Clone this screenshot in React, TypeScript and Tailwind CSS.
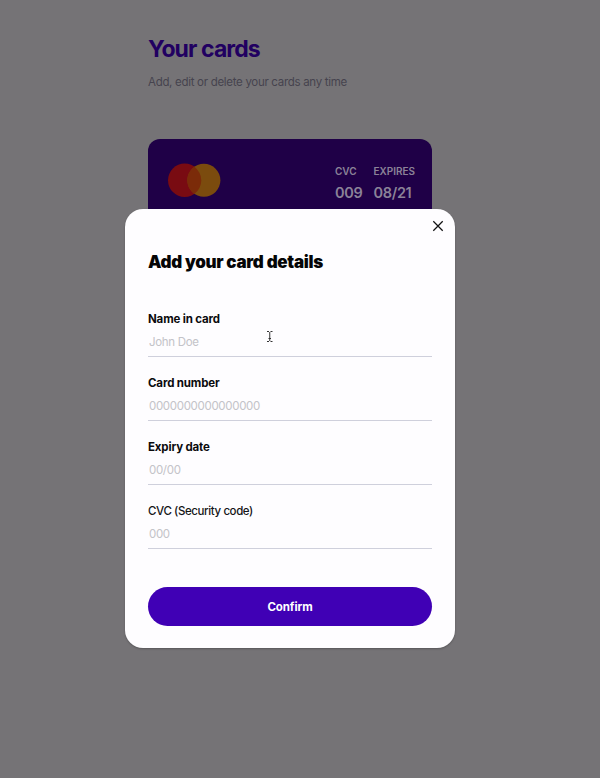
import React from "react";

type FieldProps = { label: string; placeholder: string; light?: boolean };

function Field({ label, placeholder, light }: FieldProps) {
  return (
    <label className="block h-16">
      <span
        className={
          light
            ? "block text-[11.5px] font-medium leading-4 tracking-[-0.4px] text-[#151517]"
            : "block text-[11.5px] font-bold leading-4 tracking-[-0.15px] text-[#0b0b0d]"
        }
      >
        {label}
      </span>
      <input
        placeholder={placeholder}
        className="block h-[30px] w-full border-b border-[#cfd0dc] bg-transparent px-px text-[11.5px] tracking-[-0.32px] outline-none placeholder:text-[#c3c3c8]"
      />
    </label>
  );
}

function CardFact({ name, value }: { name: string; value: string }) {
  return (
    <div>
      <div className="text-[10px] font-semibold leading-4">{name}</div>
      <div className="mt-1 text-[14.5px] font-semibold leading-5 tracking-[-0.3px]">{value}</div>
    </div>
  );
}

export default function App() {
  return (
    <div className="relative h-[778px] w-[600px] overflow-hidden bg-[#757376] font-['Inter','Liberation_Sans',sans-serif]">
      <main className="ml-[148px] w-[284px] pt-[33px]">
        <h1 className="whitespace-nowrap text-[23px] font-bold leading-8 tracking-[-0.9px] text-[#210061]">Your cards</h1>
        <p className="mt-[9px] whitespace-nowrap text-[11.5px] leading-4 tracking-[-0.3px] text-[#46434e]">
          Add, edit or delete your cards any time
        </p>
        <section className="mt-[49px] flex h-[170px] justify-between rounded-[12px] bg-[#1f0047] pl-[19px] pr-[17px] pt-6 text-[#8b8398]">
          <svg width="54" height="34" viewBox="0 0 54 34">
            <circle cx="17.7" cy="17.3" r="16.7" fill="#790b12" />
            <circle cx="36.9" cy="17.3" r="16.5" fill="#7b4b0e" />
            <path d="M27.3 3.7a16.7 16.7 0 0 1 0 27.2a16.5 16.5 0 0 1 0-27.2z" fill="#7b2b09" />
          </svg>
          <div className="flex gap-[11px]">
            <CardFact name="CVC" value="009" />
            <CardFact name="EXPIRES" value="08/21" />
          </div>
        </section>
      </main>

      <div
        role="dialog"
        className="absolute left-[125px] top-[209px] h-[439px] w-[330px] rounded-[18px] bg-[#fefdff] px-[23px] pt-[41px] shadow-[0_1px_2px_rgba(0,0,0,0.25)]"
      >
        <button aria-label="Close" className="absolute right-[11px] top-[11px] block">
          <svg width="12" height="12" viewBox="0 0 12 12" fill="none" stroke="#111" strokeWidth="1.25">
            <path d="M1.3 1.3l9.4 9.4M10.7 1.3l-9.4 9.4" />
          </svg>
        </button>
        <h2 className="whitespace-nowrap text-[17px] font-black leading-6 tracking-[-0.3px] text-[#050506]">
          Add your card details
        </h2>
        <form className="mt-[37px]">
          <Field label="Name in card" placeholder="John Doe" />
          <Field label="Card number" placeholder="0000000000000000" />
          <Field label="Expiry date" placeholder="00/00" />
          <Field label="CVC (Security code)" placeholder="000" light />
          <button
            type="button"
            className="mt-5 block h-[39px] w-[284px] rounded-full bg-[#4000b5] pt-0.5 text-[11.5px] font-bold tracking-[-0.1px] text-white"
          >
            Confirm
          </button>
        </form>
        <svg className="absolute left-[141px] top-[121px]" width="8" height="13" viewBox="0 0 8 13" fill="none" stroke="#333" strokeWidth="1">
          <path d="M1 1.5h2M4.5 1.5h2M3.75 2v9M1 11.5h2M4.5 11.5h2M2.5 8.5h2.5" />
        </svg>
      </div>
    </div>
  );
}
